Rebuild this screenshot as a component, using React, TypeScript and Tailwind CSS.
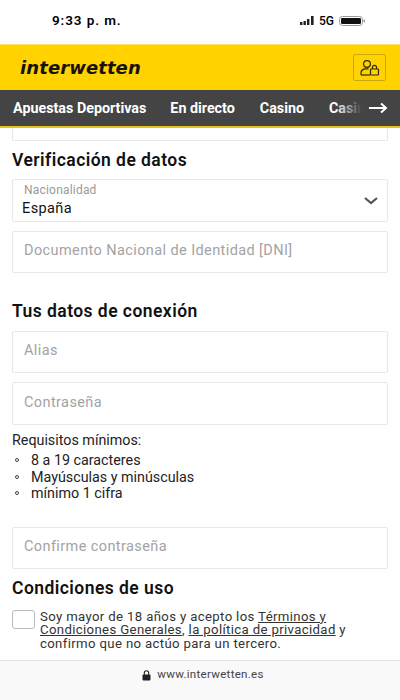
const TextField = ({ label, className }: { label: string; className: string }) => (
  <div
    className={`flex h-[42px] items-center rounded-[2px] border border-[#e8e8e8] bg-white pb-[2px] pl-[11px] text-[14.5px] tracking-[0.4px] text-[#a3a3a3] ${className}`}
  >
    {label}
  </div>
);

const StatusBar = () => (
  <div className="flex h-[44px] shrink-0 items-center bg-white pb-[3px] pl-[52px] pr-[35px] text-black">
    <span className="text-[13.5px] font-semibold tracking-[0.9px]">9:33 p. m.</span>
    <div className="ml-auto flex items-center">
      <svg width="14" height="9" viewBox="0 0 14 9" fill="#222">
        <rect x="0" y="6" width="2.4" height="3" />
        <rect x="3.5" y="5" width="2.4" height="4" />
        <rect x="7" y="3" width="2.4" height="6" />
        <rect x="11" y="0" width="2.6" height="9" />
      </svg>
      <span className="ml-[5px] text-[12px] font-medium">5G</span>
      <svg className="ml-[5px]" width="26" height="10" viewBox="0 0 26 10">
        <rect x="0.5" y="0.5" width="23" height="9" rx="3" fill="none" stroke="#999" />
        <rect x="2" y="2" width="20" height="6" rx="1.2" fill="#111" />
        <rect x="24.5" y="3.5" width="1.5" height="3" rx="0.7" fill="#999" />
      </svg>
    </div>
  </div>
);

const Header = () => (
  <div className="flex h-[46px] shrink-0 items-center justify-between border-t border-[#ffdf5c] bg-[#ffd200] pl-[20px] pr-[14px]">
    <span className="font-['DejaVu_Sans',sans-serif] text-[18px] font-bold italic leading-none tracking-[0.1px] text-[#16140a]">
      interwetten
    </span>
    <div className="flex h-[27px] w-[33px] items-center justify-center rounded-[2px] border border-[#c9a70f]">
      <svg width="20" height="18" viewBox="0 0 20 18" fill="none" stroke="#2e2a10" strokeWidth="1.2">
        <circle cx="7" cy="5" r="3.4" />
        <path d="M1 16v-2c0-2.6 2.2-4.2 5-4.2h2.5" />
        <path d="M1 16h9" />
        <rect x="10.5" y="10" width="8" height="6" rx="0.8" />
        <path d="M12.5 10V8.4a2 2 0 0 1 4 0V10" />
      </svg>
    </div>
  </div>
);

const Nav = () => (
  <div className="relative flex h-[38px] shrink-0 items-center overflow-hidden whitespace-nowrap border-b-2 border-[#e6c41a] bg-[#444444] pl-[13px] pt-[1px] text-[14.3px] font-bold text-white">
    <span>Apuestas Deportivas</span>
    <span className="ml-[24px]">En directo</span>
    <span className="ml-[25px]">Casino</span>
    <span className="ml-[25px]">Casino en vivo</span>
    <div className="absolute bottom-0 right-0 top-0 flex w-[64px] items-center bg-gradient-to-r from-transparent to-[#444444] to-40% pl-[32px]">
      <svg width="20" height="12" viewBox="0 0 20 12" fill="none" stroke="#fff" strokeWidth="2">
        <path d="M1 6h17M13 1.5 18 6l-5 4.5" />
      </svg>
    </div>
  </div>
);

const SectionTitle = ({ children, className }: { children: string; className: string }) => (
  <h2 className={`text-[17.5px] font-semibold leading-[20px] tracking-[0.45px] text-[#111] ${className}`}>{children}</h2>
);

export default function App() {
  return (
    <div className="flex h-[700px] w-[400px] flex-col overflow-hidden bg-white font-['Roboto',sans-serif]">
      <StatusBar />
      <Header />
      <Nav />

      <main className="min-h-0 flex-1 overflow-hidden px-[12px]">
        <div className="h-[13px] rounded-b-[2px] border border-t-0 border-[#e8e8e8]" />

        <SectionTitle className="mt-[9px]">Verificación de datos</SectionTitle>

        <div className="mt-[9px] flex h-[43px] items-center justify-between rounded-[2px] border border-[#e8e8e8] pl-[9px] pr-[9px]">
          <div>
            <div className="pl-[2px] text-[12px] leading-[13px] tracking-[0.2px] text-[#9a9a9a]">Nacionalidad</div>
            <div className="mt-[3px] text-[14.5px] leading-[17px] tracking-[0.4px] text-[#111]">España</div>
          </div>
          <svg width="14" height="8" viewBox="0 0 14 8" fill="none" stroke="#555" strokeWidth="2.2">
            <path d="M1 1l6 5 6-5" />
          </svg>
        </div>

        <TextField label="Documento Nacional de Identidad [DNI]" className="mt-[9px]" />

        <SectionTitle className="mt-[28px]">Tus datos de conexión</SectionTitle>

        <TextField label="Alias" className="mt-[10px] pb-[3px]" />
        <TextField label="Contraseña" className="mt-[9px] h-[43px]" />

        <p className="mt-[7px] text-[14.3px] leading-[17px] text-[#222]">Requisitos mínimos:</p>
        <ul className="mt-[3px] text-[14.3px] leading-[16.5px] text-[#222]">
          {["8 a 19 caracteres", "Mayúsculas y minúsculas", "mínimo 1 cifra"].map((item) => (
            <li key={item} className="flex items-center">
              <span className="ml-[3px] mr-[12px] h-[4px] w-[4px] rounded-full border border-[#444]" />
              {item}
            </li>
          ))}
        </ul>

        <TextField label="Confirme contraseña" className="mt-[25px]" />

        <SectionTitle className="mt-[9px]">Condiciones de uso</SectionTitle>

        <div className="mt-[11px] flex items-start">
          <div className="mt-[1px] h-[19px] w-[23px] shrink-0 rounded-[3px] border border-[#bcbcbc]" />
          <p className="ml-[5px] mt-[1px] text-[13.2px] leading-[13.5px] tracking-[0.35px] text-[#333]">
            Soy mayor de 18 años y acepto los <span className="underline">Términos y Condiciones Generales</span>,{" "}
            <span className="underline">la política de privacidad</span> y confirmo que no actúo para un tercero.
          </p>
        </div>
      </main>

      <footer className="flex h-[40px] shrink-0 justify-center border-t border-[#e6e6e6] bg-[#f9f9f9] pl-[6px] pt-[6px]">
        <div className="flex h-[16px] items-center text-[11.5px] tracking-[0.3px] text-[#444]">
          <svg className="mr-[6px]" width="9" height="11" viewBox="0 0 9 11" fill="#222">
            <rect x="0.5" y="4.5" width="8" height="6" rx="1" />
            <path d="M2.3 5V3a2.2 2.2 0 0 1 4.4 0v2" fill="none" stroke="#222" strokeWidth="1.1" />
          </svg>
          www.interwetten.es
        </div>
      </footer>
    </div>
  );
}
